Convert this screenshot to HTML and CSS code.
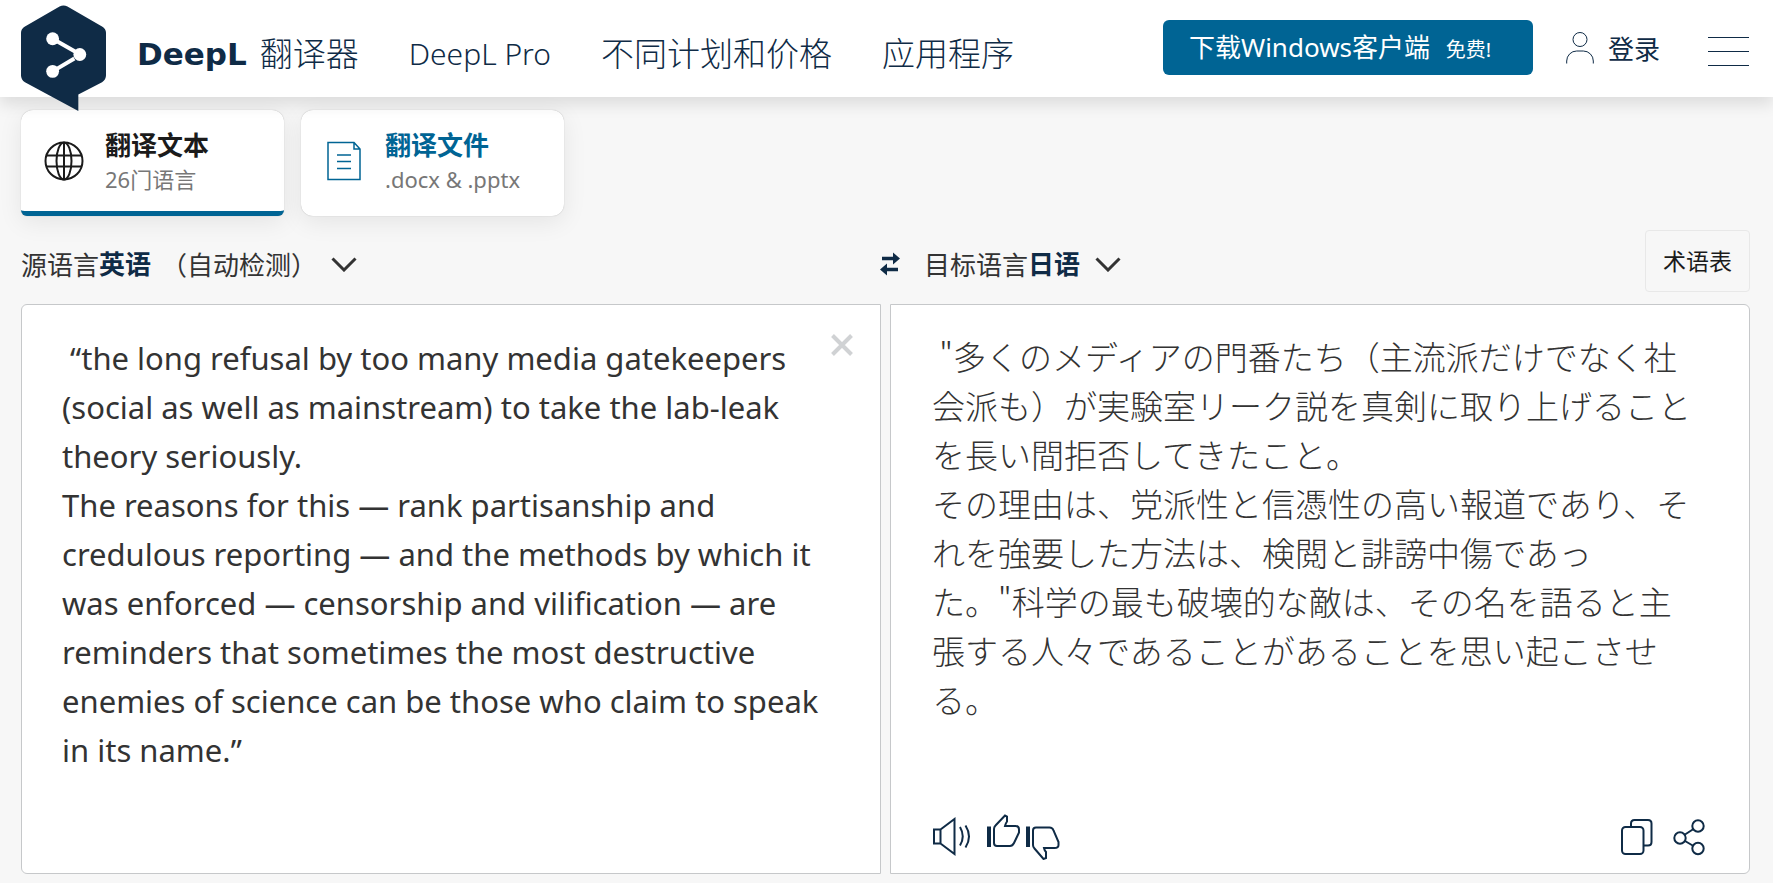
FILE: index.html
```html
<!DOCTYPE html>
<html lang="zh-CN">
  <head>
    <meta charset="UTF-8" />
    <meta name="viewport" content="width=device-width, initial-scale=1" />
    <title>DeepL 翻译器</title>
    <link rel="stylesheet" href="styles.css">
  </head>
  <body>
    <header class="header">
      <a class="brand" href="#">
        <svg class="brand-logo" viewBox="0 0 86 108" aria-hidden="true">
          <path d="M39 1.500q4-2.300 8 0l35 20q4 2.300 4 6.500v43q0 4.500-4 7L58 90.500V107L4 78q-4-2.300-4-7V28q0-4.200 4-6.500z" fill="#0f2b46" />
          <path d="M32 34l28 16M32 67l22-13" stroke="#fff" stroke-width="4" />
          <g fill="#fff">
            <circle cx="32" cy="34" r="6.500" />
            <circle cx="59.500" cy="50" r="6.500" />
            <circle cx="32" cy="67" r="6.500" />
          </g>
        </svg>
        <span class="brand-name">DeepL</span>
        <span>翻译器</span>
      </a>
      <nav class="nav">
        <a class="nav-pro" href="#">DeepL Pro</a>
        <a href="#">不同计划和价格</a>
        <a href="#">应用程序</a>
      </nav>
      <div class="header-actions">
        <a class="download" href="#">下载Windows客户端 <small>免费!</small></a>
        <a class="login" href="#">
          <svg width="28" height="32" viewBox="0 0 28 32" aria-hidden="true">
            <ellipse cx="14" cy="7.500" rx="7" ry="7" />
            <path d="M.7 31.500V29a10 10 0 0 1 10-10h6.600a10 10 0 0 1 10 10v2.500" />
          </svg>
          登录
        </a>
        <button class="menu-button" type="button" aria-label="菜单">
          <span></span>
          <span></span>
          <span></span>
        </button>
      </div>
    </header>

    <main class="translator">
      <div class="tabs">
        <button class="tab tab-active" type="button">
          <svg width="40" height="40" viewBox="0 0 40 40" aria-hidden="true">
            <g fill="none" stroke="currentColor" stroke-width="2">
              <circle cx="20" cy="20" r="18.500" />
              <ellipse cx="20" cy="20" rx="7.500" ry="18.500" />
              <path d="M2.500 14.500h35M2.500 25.500h35M20 1.500v37" />
            </g>
          </svg>
          <span class="tab-text">
            <strong>翻译文本</strong>
            <span>26门语言</span>
          </span>
        </button>
        <button class="tab tab-file" type="button">
          <svg width="40" height="40" viewBox="0 0 40 40" aria-hidden="true">
            <g fill="none" stroke="currentColor" stroke-width="1.500">
              <path d="M4 1.500h26l6 6.500v30.500H4zM30 1.500V8h6" />
              <path d="M13 14h14M13 20.500h14M13 27.500h14" />
            </g>
          </svg>
          <span class="tab-text">
            <strong>翻译文件</strong>
            <span>.docx &amp; .pptx</span>
          </span>
        </button>
      </div>

      <div class="languages">
        <div class="language">
          <label for="sourceLang">源语言</label>
          <div class="picker">
            <select id="sourceLang">
              <option>英语</option>
              <option>日语</option>
              <option>汉语</option>
            </select>
            <span class="detected">（自动检测）</span>
            <svg class="chevron" viewBox="0 0 26 15" aria-hidden="true"><path d="M1.500 1.500L13 13 24.500 1.500" /></svg>
          </div>
        </div>
        <div class="language">
          <button class="swap" type="button" aria-label="交换语言">
            <svg width="20" height="24" viewBox="0 0 20 24" aria-hidden="true">
              <path d="M2 4.800h11V.5L20 6.500l-7 6V8.200H2zM18 15.800H7v-4.300L0 17.500l7 6v-4.300h11z" />
            </svg>
          </button>
          <label for="targetLang">目标语言</label>
          <div class="picker">
            <select id="targetLang">
              <option>日语</option>
              <option>英语</option>
              <option>汉语</option>
            </select>
            <svg class="chevron" viewBox="0 0 26 15" aria-hidden="true"><path d="M1.500 1.500L13 13 24.500 1.500" /></svg>
          </div>
          <button class="glossary" type="button">术语表</button>
        </div>
      </div>

      <div class="panels">
        <section class="panel panel-source">
          <textarea lang="en" aria-label="原文" spellcheck="false"> “the long refusal by too many media gatekeepers (social as well as mainstream) to take the lab-leak theory seriously.
The reasons for this — rank partisanship and credulous reporting — and the methods by which it was enforced — censorship and vilification — are reminders that sometimes the most destructive enemies of science can be those who claim to speak in its name.”</textarea>
          <button class="clear" type="button" aria-label="清除">
            <svg width="22" height="22" viewBox="0 0 22 22" aria-hidden="true"><path d="M1.500 1.500l19 19M20.500 1.500l-19 19" /></svg>
          </button>
        </section>

        <section class="panel panel-target">
          <textarea lang="ja" aria-label="译文" spellcheck="false"> "多くのメディアの門番たち（主流派だけでなく社会派も）が実験室リーク説を真剣に取り上げることを長い間拒否してきたこと。
その理由は、党派性と信憑性の高い報道であり、それを強要した方法は、検閲と誹謗中傷であった。"科学の最も破壊的な敵は、その名を語ると主張する人々であることがあることを思い起こさせる。</textarea>
          <div class="toolbar">
            <button type="button" aria-label="朗读">
              <svg width="38" height="46" viewBox="0 0 38 46">
                <path d="M1 15.500h6.500v14H1zM7.500 15.500L21.500 5v35L7.500 29.500M27 13q5.500 9.500 0 18.500M32.500 11.500q7 11 0 22" />
              </svg>
            </button>
            <div class="rating">
              <button type="button" aria-label="赞">
                <svg width="34" height="46" viewBox="0 0 34 46">
                  <path d="M3 12.500v20.500" stroke-width="4" />
                  <path d="M8 15q0-2 1.500-3.500L19 1.500l2 1v5q-1.500 2-2 4.500h10.500q3.500 0 3.500 3.500v3l-5 10.500q-1.500 3-4 3H11q-3 0-3-3z" />
                </svg>
              </button>
              <button type="button" aria-label="踩">
                <svg width="34" height="46" viewBox="0 0 34 46">
                  <path d="M2 12.500v20.500" stroke-width="4" />
                  <path d="M7 31q0 2 1.500 3.500L17.500 45l2.500-1v-6q-1.500-1.500-2-4h10.500q4 0 4-3v-3l-5-11.500q-1-3-4-3H10q-3 0-3 3z" />
                </svg>
              </button>
            </div>
            <div class="share">
              <button type="button" aria-label="复制">
                <svg width="32" height="46" viewBox="0 0 32 46">
                  <rect x="1" y="13" width="21.500" height="27" rx="3.500" />
                  <path d="M10 13V9.500Q10 6 13.500 6h13.500q3.500 0 3.500 3.500V28q0 3.500-3.500 3.500h-4.500" />
                </svg>
              </button>
              <button type="button" aria-label="分享">
                <svg width="32" height="46" viewBox="0 0 32 46">
                  <circle cx="7" cy="24" r="5.700" />
                  <circle cx="25" cy="12" r="5.700" />
                  <circle cx="25" cy="34.500" r="5.700" />
                  <path d="M12 20.500l8.500-5.500M12 27l8.500 5" />
                </svg>
              </button>
            </div>
          </div>
        </section>
      </div>
    </main>
  </body>
</html>
```
FILE: styles.css
```css
* {
  box-sizing: border-box;
}
body {
  margin: 0;
  min-height: 100vh;
  display: flex;
  flex-direction: column;
  background-color: #f7f7f7;
  color: #333;
  font-family: "Noto Sans", "Noto Sans CJK SC", sans-serif;
  font-size: 26px;
}
a {
  color: inherit;
  text-decoration: none;
}
button,
select,
textarea {
  margin: 0;
  padding: 0;
  border: none;
  background: none;
  color: inherit;
  font: inherit;
}
button,
select {
  cursor: pointer;
}
svg {
  display: block;
  flex: none;
}

/* header */
.header {
  position: relative;
  z-index: 1;
  display: flex;
  align-items: center;
  height: 97px;
  padding: 0 24px 0 21px;
  background-color: #fff;
  box-shadow: 0 8px 14px rgba(0, 0, 0, 0.1);
  color: #0f2b46;
  white-space: nowrap;
}
.brand,
.nav {
  display: flex;
  align-items: center;
  height: 97px;
  padding-top: 10px;
  font-size: 33px;
  line-height: 48px;
  font-weight: 300;
}
.brand {
  gap: 13px;
}
.brand-logo {
  align-self: flex-start;
  width: 85px;
  height: 107px;
  margin: -5px 18px 0 0;
}
.brand-name {
  font-family: "DejaVu Sans", sans-serif;
  font-size: 31px;
  font-weight: 700;
}
.nav {
  gap: 50px;
  margin-left: 50px;
}
.nav-pro {
  font-size: 30px;
}
.header-actions {
  display: flex;
  align-items: center;
  margin-left: auto;
  padding-bottom: 2px;
}
.download {
  width: 370px;
  height: 55px;
  padding-left: 26px;
  border-radius: 6px;
  background-color: #006494;
  color: #fff;
  line-height: 55px;
}
.download small {
  margin-left: 9px;
  font-size: 20px;
}
.login {
  display: flex;
  align-items: center;
  gap: 14px;
  margin-left: 33px;
}
.login svg {
  fill: none;
  stroke: currentColor;
}
.menu-button {
  display: grid;
  gap: 13px;
  width: 41px;
  margin-left: 48px;
  padding-top: 8px;
}
.menu-button span {
  height: 1px;
  background-color: #0f2b46;
}

/* tabs */
.translator {
  flex: 1;
  display: flex;
  flex-direction: column;
  padding: 13px 23px 9px 21px;
}
.tabs {
  display: flex;
  gap: 17px;
}
.tab {
  display: flex;
  align-items: center;
  gap: 21px;
  width: 263px;
  height: 106px;
  padding: 0 23px 4px;
  border-radius: 12px;
  background-color: #fff;
  box-shadow: 0 0 1px rgba(0, 0, 0, 0.3), 0 6px 24px rgba(0, 0, 0, 0.08);
  color: #1b1b1b;
  text-align: left;
}
.tab-active {
  overflow: hidden;
  border-bottom: 5px solid #006494;
  border-radius: 12px 12px 6px 6px;
  padding-bottom: 0;
}
.tab-file {
  color: #006494;
}
.tab-text {
  display: grid;
  padding-top: 2px;
  line-height: 34px;
}
.tab-text span {
  color: #777;
  font-size: 22px;
}

/* language bar */
.languages,
.panels {
  display: grid;
  grid-template-columns: 1fr 1fr;
  column-gap: 9px;
}
.languages {
  margin: 14px 0 12px;
}
.language {
  display: flex;
  align-items: center;
  height: 62px;
  min-width: 0;
  white-space: nowrap;
}
.language label,
.picker,
.swap {
  padding-top: 6px;
}
.picker {
  display: grid;
  align-items: center;
}
.picker > * {
  grid-area: 1 / 1;
}
.picker select {
  appearance: none;
  width: 93px;
  color: #0f2b46;
  font-weight: 700;
}
#sourceLang {
  width: 258px;
}
.detected {
  margin-left: 62px;
  pointer-events: none;
}
.chevron {
  justify-self: end;
  width: 26px;
  height: 15px;
  fill: none;
  stroke: #333;
  stroke-width: 3;
  pointer-events: none;
}
.swap {
  margin: 0 24px 0 -10px;
  fill: #0f2b46;
}
.glossary {
  align-self: stretch;
  width: 105px;
  margin-left: auto;
  padding-bottom: 2px;
  border: 1px solid #e8e8e8;
  border-radius: 4px;
  color: #1b1b1b;
  font-size: 23px;
}

/* text panels */
.panels {
  flex: 1;
}
.panel {
  position: relative;
  display: flex;
  flex-direction: column;
  min-width: 0;
  border: 1px solid #c6c8ca;
  background-color: #fff;
}
.panel-source {
  border-radius: 6px 0 0 6px;
}
.panel-target {
  border-radius: 0 6px 6px 0;
}
.panel textarea {
  flex: 1;
  min-height: 420px;
  padding: 29px 51px 0 40px;
  outline: none;
  resize: none;
  overflow: hidden;
  font-size: 31px;
  line-height: 49px;
}
.panel-target textarea {
  padding: 27px 51px 0 41px;
  font-family: "Noto Sans CJK JP", sans-serif;
  font-size: 33px;
  font-weight: 300;
}
.clear {
  position: absolute;
  top: 29px;
  right: 27px;
  stroke: #d0d2d4;
  stroke-width: 4;
}
.toolbar {
  display: flex;
  align-items: center;
  gap: 15px;
  padding: 0 44px 13px 42px;
  fill: none;
  stroke: #0f2b46;
  stroke-width: 2;
}
.rating {
  display: flex;
  gap: 6px;
}
.share {
  display: flex;
  gap: 20px;
  margin-left: auto;
}
```
